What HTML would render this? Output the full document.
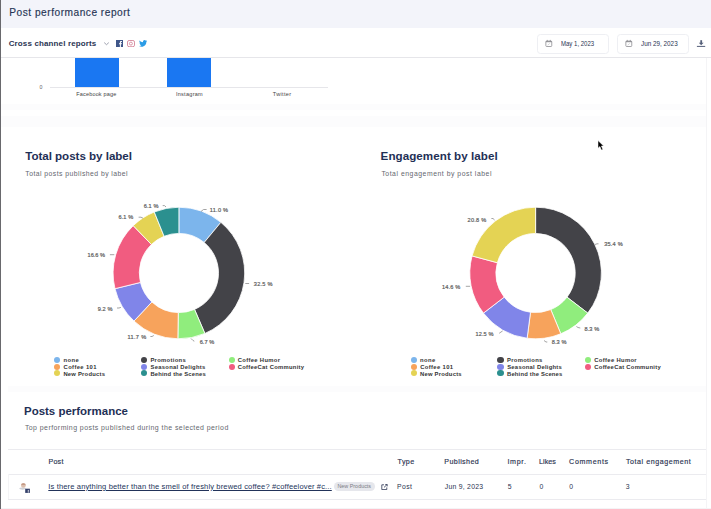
<!DOCTYPE html>
<html><head><meta charset="utf-8">
<style>
html,body{margin:0;padding:0;}
body{width:711px;height:509px;overflow:hidden;position:relative;background:#fff;font-family:"Liberation Sans",sans-serif;}
.a{position:absolute;white-space:nowrap;line-height:1;}
.hdr{position:absolute;left:0;top:0;width:711px;height:27.5px;background:#f3f4fa;}
.lb{position:absolute;left:0;top:0;width:1.3px;height:509px;background:#69696d;}
.hl{position:absolute;height:1px;background:#ebebef;}
.date{position:absolute;top:34px;height:19.5px;border:1px solid #eeeff3;border-radius:3.5px;background:#fff;box-sizing:border-box;}
.dot{position:absolute;width:6.2px;height:6.2px;border-radius:50%;}
</style></head><body>
<div class="hdr"></div>
<svg class="a" style="left:103px;top:41px" width="7" height="5" viewBox="0 0 7 5"><path d="M1.2 1.6L3.5 3.7L5.8 1.6" fill="none" stroke="#7d8294" stroke-width="0.75"/></svg>
<svg class="a" style="left:116px;top:40px" width="7" height="7" viewBox="0 0 7 7"><rect width="7" height="7" fill="#3f5689"/><path d="M4.9 7V4.2H5.8L6 3.2H4.9V2.6C4.9 2.3 5 2.1 5.4 2.1H6V1.2C5.9 1.2 5.6 1.1 5.2 1.1 4.4 1.1 3.9 1.6 3.9 2.5V3.2H3V4.2H3.9V7Z" fill="#fff"/></svg>
<svg class="a" style="left:127px;top:40px" width="8" height="7" viewBox="0 0 8 7"><rect x="0.5" y="0.5" width="7" height="6.2" rx="1.6" fill="none" stroke="#cc6d86" stroke-width="0.75"/><circle cx="3.9" cy="3.6" r="1.5" fill="none" stroke="#cc6d86" stroke-width="0.7"/></svg>
<svg class="a" style="left:138.5px;top:40.3px" width="8.2" height="7" viewBox="0 0 24 20"><path d="M24 2.4c-.9.4-1.8.6-2.8.8 1-.6 1.8-1.6 2.2-2.7-1 .6-2 1-3.1 1.2C19.3.7 18 0 16.6 0c-2.7 0-4.9 2.2-4.9 4.9 0 .4 0 .8.1 1.1C7.7 5.8 4.1 3.9 1.700.9c-.4.7-.7 1.600-.7 2.500 0 1.700.9 3.200 2.200 4.100-.8 0-1.600-.2-2.200-.6v.1c0 2.400 1.700 4.400 3.900 4.800-.4.1-.8.2-1.300.2-.3 0-.6 0-.9-.1.6 2 2.400 3.400 4.600 3.400-1.700 1.300-3.800 2.100-6.100 2.100-.4 0-.8 0-1.200-.1 2.200 1.400 4.800 2.200 7.500 2.200 9.100 0 14-7.500 14-14v-.6c1-.7 1.800-1.600 2.500-2.500z" fill="#2b9ce6"/></svg>

<div class="date" style="left:537px;width:72px;"></div>
<svg class="a" style="left:544.6px;top:39px" width="9" height="9" viewBox="0 0 9 9"><rect x="0.85" y="2.1" width="5.9" height="5.4" rx="0.8" fill="none" stroke="#8e8e93" stroke-width="0.8"/><rect x="0.85" y="2.1" width="5.9" height="1.1" fill="#8e8e93"/><path d="M2.3 0.9V2.4M5.3 0.9V2.4" stroke="#8e8e93" stroke-width="0.8"/><path d="M2.6 6.2L4.8 4.4" stroke="#b0b0b4" stroke-width="0.5"/></svg>
<div class="date" style="left:617px;width:72px;"></div>
<svg class="a" style="left:624.6px;top:39px" width="9" height="9" viewBox="0 0 9 9"><rect x="0.85" y="2.1" width="5.9" height="5.4" rx="0.8" fill="none" stroke="#8e8e93" stroke-width="0.8"/><rect x="0.85" y="2.1" width="5.9" height="1.1" fill="#8e8e93"/><path d="M2.3 0.9V2.4M5.3 0.9V2.4" stroke="#8e8e93" stroke-width="0.8"/><path d="M2.6 6.2L4.8 4.4" stroke="#b0b0b4" stroke-width="0.5"/></svg>
<svg class="a" style="left:696px;top:39px" width="10" height="9" viewBox="696 39 10 9"><rect x="700.3" y="40.2" width="1.8" height="3" fill="#56607a"/><path d="M698.8 42.7H703.6L701.2 45.2Z" fill="#56607a"/><rect x="696.9" y="45.9" width="8.3" height="1" fill="#56607a"/></svg>
<div class="a" style="left:1px;top:104px;width:706px;height:6px;background:#fcfcfd;"></div>
<div class="a" style="left:1px;top:116px;width:706px;height:11px;background:#fcfcfd;"></div>
<div class="a" style="left:8px;top:386px;width:698px;height:6px;background:#fcfcfd;"></div>
<div class="hl" style="left:1px;top:57px;width:710px;background:#e6e6ea;"></div>

<div class="a" style="left:75px;top:58px;width:44px;height:29px;background:#1a77f2;"></div>
<div class="a" style="left:167.4px;top:58px;width:44px;height:29px;background:#1a77f2;"></div>
<div class="hl" style="left:50px;top:87px;width:278px;background:#e6e6ea;"></div>

<svg class="a" style="left:0;top:0" width="711" height="509" viewBox="0 0 711 509">
<g stroke="#ffffff" stroke-width="0.8" stroke-linejoin="round">

<path d="M178.90 207.20A65.8 65.8 0 0 1 220.88 222.33L204.16 242.51A39.6 39.6 0 0 0 178.90 233.40Z" fill="#7cb5ec"/>
<path d="M220.88 222.33A65.8 65.8 0 0 1 204.87 333.46L194.53 309.39A39.6 39.6 0 0 0 204.16 242.51Z" fill="#434348"/>
<path d="M204.87 333.46A65.8 65.8 0 0 1 177.87 338.79L178.28 312.60A39.6 39.6 0 0 0 194.53 309.39Z" fill="#90ed7d"/>
<path d="M177.87 338.79A65.8 65.8 0 0 1 133.97 321.07L151.86 301.93A39.6 39.6 0 0 0 178.28 312.60Z" fill="#f7a35c"/>
<path d="M133.97 321.07A65.8 65.8 0 0 1 114.99 288.68L140.44 282.44A39.6 39.6 0 0 0 151.86 301.93Z" fill="#8085e9"/>
<path d="M114.99 288.68A65.8 65.8 0 0 1 133.22 225.64L151.41 244.50A39.6 39.6 0 0 0 140.44 282.44Z" fill="#f15c80"/>
<path d="M133.22 225.64A65.8 65.8 0 0 1 154.27 211.98L164.08 236.28A39.6 39.6 0 0 0 151.41 244.50Z" fill="#e4d354"/>
<path d="M154.27 211.98A65.8 65.8 0 0 1 178.90 207.20L178.90 233.40A39.6 39.6 0 0 0 164.08 236.28Z" fill="#2b908f"/>


<path d="M535.60 207.20A65.8 65.8 0 0 1 587.76 313.12L566.99 297.14A39.6 39.6 0 0 0 535.60 233.40Z" fill="#434348"/>
<path d="M587.76 313.12A65.8 65.8 0 0 1 560.80 333.78L550.77 309.58A39.6 39.6 0 0 0 566.99 297.14Z" fill="#90ed7d"/>
<path d="M560.80 333.78A65.8 65.8 0 0 1 527.14 338.25L530.51 312.27A39.6 39.6 0 0 0 550.77 309.58Z" fill="#f7a35c"/>
<path d="M527.14 338.25A65.8 65.8 0 0 1 483.44 313.12L504.21 297.14A39.6 39.6 0 0 0 530.51 312.27Z" fill="#8085e9"/>
<path d="M483.44 313.12A65.8 65.8 0 0 1 472.06 255.92L497.36 262.72A39.6 39.6 0 0 0 504.21 297.14Z" fill="#f15c80"/>
<path d="M472.06 255.92A65.8 65.8 0 0 1 535.60 207.20L535.60 233.40A39.6 39.6 0 0 0 497.36 262.72Z" fill="#e4d354"/>

</g>
<g fill="none" stroke="#939393" stroke-width="0.85"><polyline points="201,211.5 203.5,209.5 206.6,209.5"/><polyline points="245.3,283.5 247,283.5 249.1,283.5"/><polyline points="191,338.5 193,340.5 194.3,341.2"/><polyline points="150.4,336.5 152,336.5 153.8,335.5"/><polyline points="117,308 119,308 120.9,307.4"/><polyline points="109.9,254.7 112,254.7 114.3,254.7"/><polyline points="138.6,217.2 141,217.2 143,218.2"/><polyline points="162.7,205.6 164.5,205.6 166,207"/><polyline points="595,244.5 597,243.8 598.5,243.8"/><polyline points="576.4,326.5 578,327.5 580.3,328"/><polyline points="544,340.5 546,342 547.3,342"/><polyline points="499.2,333.3 501,332 502.6,331"/><polyline points="465.8,286.3 468,286.3 470.1,286.3"/><polyline points="491.4,218.5 493,218.5 494.6,220"/></g>
</svg>
<div class="a" style="left:209.70px;top:208.00px;font-size:5.600px;letter-spacing:0.280px;font-weight:400;color:#555555;-webkit-text-stroke:0.2px #666;">11.0&nbsp;%</div>
<div class="a" style="left:253.80px;top:282.30px;font-size:5.600px;letter-spacing:0.240px;font-weight:400;color:#555555;-webkit-text-stroke:0.2px #666;">32.5&nbsp;%</div>
<div class="a" style="left:199.70px;top:339.70px;font-size:5.600px;letter-spacing:0.075px;font-weight:400;color:#555555;-webkit-text-stroke:0.2px #666;">6.7&nbsp;%</div>
<div class="a" style="left:127.50px;top:334.80px;font-size:5.600px;letter-spacing:0.320px;font-weight:400;color:#555555;-webkit-text-stroke:0.2px #666;">11.7&nbsp;%</div>
<div class="a" style="left:97.70px;top:306.80px;font-size:5.600px;letter-spacing:0.100px;font-weight:400;color:#555555;-webkit-text-stroke:0.2px #666;">9.2&nbsp;%</div>
<div class="a" style="left:87.50px;top:253.20px;font-size:5.600px;letter-spacing:0.020px;font-weight:400;color:#555555;-webkit-text-stroke:0.2px #666;">16.6&nbsp;%</div>
<div class="a" style="left:118.50px;top:215.40px;font-size:5.600px;letter-spacing:0.100px;font-weight:400;color:#555555;-webkit-text-stroke:0.2px #666;">6.1&nbsp;%</div>
<div class="a" style="left:143.70px;top:203.70px;font-size:5.600px;letter-spacing:0.100px;font-weight:400;color:#555555;-webkit-text-stroke:0.2px #666;">6.1&nbsp;%</div>
<div class="a" style="left:604.20px;top:241.70px;font-size:5.600px;letter-spacing:0.200px;font-weight:400;color:#555555;-webkit-text-stroke:0.2px #666;">35.4&nbsp;%</div>
<div class="a" style="left:584.50px;top:327.10px;font-size:5.600px;letter-spacing:0.075px;font-weight:400;color:#555555;-webkit-text-stroke:0.2px #666;">8.3&nbsp;%</div>
<div class="a" style="left:551.80px;top:339.90px;font-size:5.600px;letter-spacing:0.075px;font-weight:400;color:#555555;-webkit-text-stroke:0.2px #666;">8.3&nbsp;%</div>
<div class="a" style="left:475.50px;top:331.60px;font-size:5.600px;letter-spacing:0.100px;font-weight:400;color:#555555;-webkit-text-stroke:0.2px #666;">12.5&nbsp;%</div>
<div class="a" style="left:441.90px;top:285.20px;font-size:5.600px;letter-spacing:0.160px;font-weight:400;color:#555555;-webkit-text-stroke:0.2px #666;">14.6&nbsp;%</div>
<div class="a" style="left:467.60px;top:217.90px;font-size:5.600px;letter-spacing:0.240px;font-weight:400;color:#555555;-webkit-text-stroke:0.2px #666;">20.8&nbsp;%</div>
<div class="dot" style="left:54.10px;top:356.90px;background:#7cb5ec"></div>
<div class="a" style="left:63.40px;top:358.10px;font-size:5.850px;letter-spacing:0.467px;font-weight:700;color:#333333;">none</div>
<div class="dot" style="left:140.80px;top:356.90px;background:#434348"></div>
<div class="a" style="left:150.40px;top:358.10px;font-size:5.850px;letter-spacing:0.311px;font-weight:700;color:#333333;">Promotions</div>
<div class="dot" style="left:228.50px;top:356.90px;background:#90ed7d"></div>
<div class="a" style="left:237.70px;top:358.10px;font-size:5.850px;letter-spacing:0.336px;font-weight:700;color:#333333;">Coffee Humor</div>
<div class="dot" style="left:54.10px;top:363.70px;background:#f7a35c"></div>
<div class="a" style="left:63.60px;top:364.90px;font-size:5.850px;letter-spacing:0.367px;font-weight:700;color:#333333;">Coffee 101</div>
<div class="dot" style="left:140.80px;top:363.70px;background:#8085e9"></div>
<div class="a" style="left:150.60px;top:364.90px;font-size:5.850px;letter-spacing:0.269px;font-weight:700;color:#333333;">Seasonal Delights</div>
<div class="dot" style="left:228.50px;top:363.70px;background:#f15c80"></div>
<div class="a" style="left:237.70px;top:364.90px;font-size:5.850px;letter-spacing:0.278px;font-weight:700;color:#333333;">CoffeeCat Community</div>
<div class="dot" style="left:54.10px;top:370.30px;background:#e4d354"></div>
<div class="a" style="left:63.40px;top:371.50px;font-size:5.850px;letter-spacing:0.236px;font-weight:700;color:#333333;">New Products</div>
<div class="dot" style="left:140.80px;top:370.30px;background:#2b908f"></div>
<div class="a" style="left:150.40px;top:371.50px;font-size:5.850px;letter-spacing:0.188px;font-weight:700;color:#333333;">Behind the Scenes</div>
<div class="dot" style="left:410.70px;top:356.90px;background:#7cb5ec"></div>
<div class="a" style="left:420.00px;top:358.10px;font-size:5.850px;letter-spacing:0.467px;font-weight:700;color:#333333;">none</div>
<div class="dot" style="left:497.40px;top:356.90px;background:#434348"></div>
<div class="a" style="left:507.00px;top:358.10px;font-size:5.850px;letter-spacing:0.311px;font-weight:700;color:#333333;">Promotions</div>
<div class="dot" style="left:585.10px;top:356.90px;background:#90ed7d"></div>
<div class="a" style="left:594.30px;top:358.10px;font-size:5.850px;letter-spacing:0.336px;font-weight:700;color:#333333;">Coffee Humor</div>
<div class="dot" style="left:410.70px;top:363.70px;background:#f7a35c"></div>
<div class="a" style="left:420.20px;top:364.90px;font-size:5.850px;letter-spacing:0.367px;font-weight:700;color:#333333;">Coffee 101</div>
<div class="dot" style="left:497.40px;top:363.70px;background:#8085e9"></div>
<div class="a" style="left:507.20px;top:364.90px;font-size:5.850px;letter-spacing:0.269px;font-weight:700;color:#333333;">Seasonal Delights</div>
<div class="dot" style="left:585.10px;top:363.70px;background:#f15c80"></div>
<div class="a" style="left:594.30px;top:364.90px;font-size:5.850px;letter-spacing:0.278px;font-weight:700;color:#333333;">CoffeeCat Community</div>
<div class="dot" style="left:410.70px;top:370.30px;background:#e4d354"></div>
<div class="a" style="left:420.00px;top:371.50px;font-size:5.850px;letter-spacing:0.236px;font-weight:700;color:#333333;">New Products</div>
<div class="dot" style="left:497.40px;top:370.30px;background:#2b908f"></div>
<div class="a" style="left:507.00px;top:371.50px;font-size:5.850px;letter-spacing:0.188px;font-weight:700;color:#333333;">Behind the Scenes</div>

<div class="hl" style="left:8px;top:449px;width:698px;"></div>
<div class="hl" style="left:8px;top:474px;width:698px;"></div>
<div class="hl" style="left:8px;top:499px;width:698px;"></div>
<div class="a" style="left:333.9px;top:482.1px;width:40.8px;height:8.7px;border-radius:4.4px;background:#e6e7ec;"></div>
<svg class="a" style="left:381px;top:483.8px" width="7" height="6.2" viewBox="0 0 7 6.2"><path d="M3 0.8H0.8V5.6H5.8V3.4" fill="none" stroke="#2a3350" stroke-width="0.8"/><path d="M3 3.4L6.2 0.4M4.2 0.4H6.2V2.4" fill="none" stroke="#2a3350" stroke-width="0.8"/></svg>
<svg class="a" style="left:16px;top:480px" width="16" height="16" viewBox="16 480 16 16"><ellipse cx="22.6" cy="488.6" rx="3.2" ry="1.1" fill="#cfd0d6"/><circle cx="23.4" cy="485.4" r="2.4" fill="#dcbfae"/><path d="M21.1 485A2.4 2.4 0 0 1 25.7 485Z" fill="#c49a86"/><rect x="25.2" y="488.7" width="4.7" height="4.2" fill="#34406a"/><path d="M28.3 492.9V490.3H28.9M27.7 490.9H29" stroke="#fff" stroke-width="0.55" fill="none"/></svg>

<div class="a" style="left:9.30px;top:8.10px;font-size:10.174px;letter-spacing:0.505px;font-weight:400;color:#263555;-webkit-text-stroke:0.15px #263555;">Post performance report</div>
<div class="a" style="left:8.70px;top:39.70px;font-size:7.994px;letter-spacing:0.140px;font-weight:700;color:#2b3553;">Cross channel reports</div>
<div class="a" style="left:561.07px;top:40.70px;font-size:6.831px;letter-spacing:0.000px;font-weight:400;color:#2b3553;transform:scaleX(0.8828);transform-origin:0 0;">May 1, 2023</div>
<div class="a" style="left:641.11px;top:40.70px;font-size:6.831px;letter-spacing:0.000px;font-weight:400;color:#2b3553;transform:scaleX(0.9284);transform-origin:0 0;">Jun 29, 2023</div>
<div class="a" style="left:39.60px;top:85.10px;font-size:5.233px;letter-spacing:0.000px;font-weight:400;color:#666;">0</div>
<div class="a" style="left:76.30px;top:91.80px;font-size:5.523px;letter-spacing:0.158px;font-weight:400;color:#444;">Facebook page</div>
<div class="a" style="left:175.90px;top:91.80px;font-size:5.523px;letter-spacing:0.288px;font-weight:400;color:#444;">Instagram</div>
<div class="a" style="left:272.80px;top:91.80px;font-size:5.523px;letter-spacing:0.333px;font-weight:400;color:#444;">Twitter</div>
<div class="a" style="left:25.20px;top:149.90px;font-size:11.628px;letter-spacing:-0.037px;font-weight:700;color:#1f3056;">Total posts by label</div>
<div class="a" style="left:25.30px;top:170.90px;font-size:6.831px;letter-spacing:0.452px;font-weight:400;color:#65676f;">Total posts published by label</div>
<div class="a" style="left:380.60px;top:149.90px;font-size:11.628px;letter-spacing:0.056px;font-weight:700;color:#1f3056;">Engagement by label</div>
<div class="a" style="left:381.40px;top:170.90px;font-size:6.831px;letter-spacing:0.534px;font-weight:400;color:#65676f;">Total engagement by post label</div>
<div class="a" style="left:24.00px;top:405.90px;font-size:11.483px;letter-spacing:0.000px;font-weight:700;color:#1f3056;">Posts performance</div>
<div class="a" style="left:24.90px;top:424.10px;font-size:6.977px;letter-spacing:0.436px;font-weight:400;color:#65676f;">Top performing posts published during the selected period</div>
<div class="a" style="left:48.40px;top:459.20px;font-size:7.122px;letter-spacing:0.267px;font-weight:400;color:#2a3350;-webkit-text-stroke:0.15px #2a3350;">Post</div>
<div class="a" style="left:397.50px;top:459.20px;font-size:7.122px;letter-spacing:0.433px;font-weight:400;color:#2a3350;-webkit-text-stroke:0.15px #2a3350;">Type</div>
<div class="a" style="left:444.30px;top:459.20px;font-size:7.122px;letter-spacing:0.400px;font-weight:400;color:#2a3350;-webkit-text-stroke:0.15px #2a3350;">Published</div>
<div class="a" style="left:507.40px;top:459.20px;font-size:7.122px;letter-spacing:0.675px;font-weight:400;color:#2a3350;-webkit-text-stroke:0.15px #2a3350;">Impr.</div>
<div class="a" style="left:539.10px;top:459.20px;font-size:7.122px;letter-spacing:0.050px;font-weight:400;color:#2a3350;-webkit-text-stroke:0.15px #2a3350;">Likes</div>
<div class="a" style="left:569.10px;top:459.20px;font-size:7.122px;letter-spacing:0.671px;font-weight:400;color:#2a3350;-webkit-text-stroke:0.15px #2a3350;">Comments</div>
<div class="a" style="left:625.90px;top:459.20px;font-size:7.122px;letter-spacing:0.553px;font-weight:400;color:#2a3350;-webkit-text-stroke:0.15px #2a3350;">Total engagement</div>
<div class="a" style="left:48.30px;top:482.80px;font-size:7.558px;letter-spacing:0.137px;font-weight:400;color:#22335a;text-decoration:underline;">Is there anything better than the smell of freshly brewed coffee? #coffeelover #c...</div>
<div class="a" style="left:337.40px;top:483.80px;font-size:5.378px;letter-spacing:0.027px;font-weight:400;color:#7a7c85;">New Products</div>
<div class="a" style="left:397.10px;top:483.80px;font-size:6.831px;letter-spacing:0.367px;font-weight:400;color:#2a3350;">Post</div>
<div class="a" style="left:444.80px;top:483.80px;font-size:6.831px;letter-spacing:0.260px;font-weight:400;color:#2a3350;">Jun 9, 2023</div>
<div class="a" style="left:507.80px;top:483.80px;font-size:6.831px;letter-spacing:0.000px;font-weight:400;color:#2a3350;">5</div>
<div class="a" style="left:539.40px;top:483.80px;font-size:6.831px;letter-spacing:0.000px;font-weight:400;color:#2a3350;">0</div>
<div class="a" style="left:569.20px;top:483.80px;font-size:6.831px;letter-spacing:0.000px;font-weight:400;color:#2a3350;">0</div>
<div class="a" style="left:625.80px;top:483.80px;font-size:6.831px;letter-spacing:0.000px;font-weight:400;color:#2a3350;">3</div>
<div class="a" style="left:8px;top:474px;width:1px;height:25px;background:#f4f4f6;"></div>
<div class="a" style="left:706px;top:58px;width:1px;height:450px;background:#f4f4f6;"></div>
<div class="a" style="left:0;top:507.5px;width:711px;height:1.5px;background:#f4f4f6;"></div>
<svg class="a" style="left:596px;top:139px" width="10" height="13" viewBox="596 139 10 13"><path d="M598 140.6V148.2L599.9 146.5L601.4 150.1L602.9 149.5L601.4 146L603.6 145.9Z" fill="#000" stroke="#fff" stroke-width="0.5"/></svg>
<div class="lb"></div>
</body></html>
